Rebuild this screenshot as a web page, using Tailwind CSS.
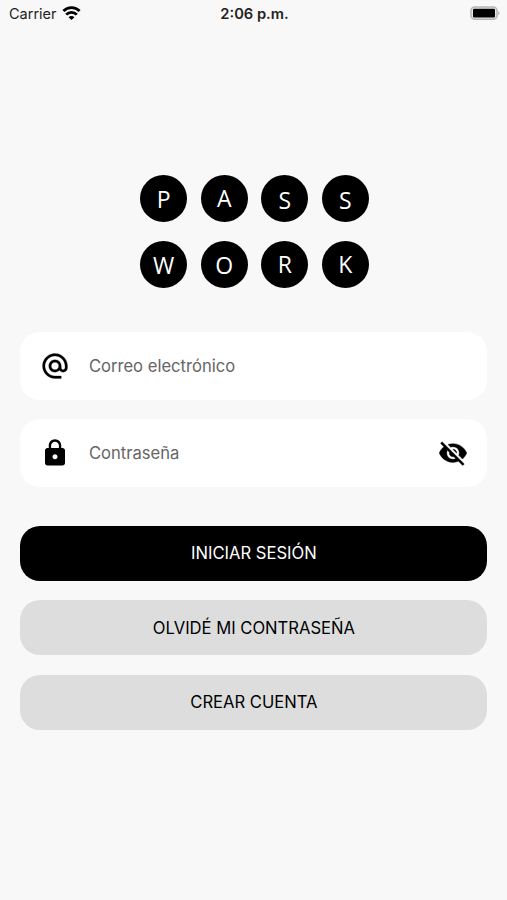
<!DOCTYPE html>
<html lang="es">
<head>
    <meta charset="UTF-8">
    <meta name="viewport" content="width=device-width, initial-scale=1.0">
    <title>Passwork</title>
    <script src="https://cdn.jsdelivr.net/npm/@tailwindcss/browser@4"></script>
</head>
<body class="bg-[#f8f8f8] font-['Inter',sans-serif] text-black">
    <div class="flex flex-col h-screen w-full overflow-hidden">

        <!-- Status bar -->
        <header class="grid grid-cols-3 items-center h-7 pl-[9px] pr-[7px] text-[14.5px] text-[#222]">
            <div class="flex items-center gap-[5px]">
                <span>Carrier</span>
                <svg class="w-[19px] h-[14px] -mt-0.5" viewBox="0 0 18 14" fill="none" stroke="#000" stroke-width="2.8">
                    <path d="M.9 5.100a11.300 11.300 0 0 1 16.200 0"/>
                    <path d="M3.700 8.600a7.300 7.300 0 0 1 10.600 0"/>
                    <path d="M9 14l-2.900-2.800a4 4 0 0 1 5.800 0z" fill="#000" stroke="none"/>
                </svg>
            </div>
            <span class="text-center font-semibold whitespace-nowrap text-[14.7px]">2:06 p.m.</span>
            <div class="flex justify-end">
                <svg class="w-[30px] h-[14px] -mt-0.5" viewBox="0 0 30 14">
                    <rect x="1" y="0.9" width="26" height="12.4" rx="3.8" fill="#e8e8e8" stroke="#b4b4b4" stroke-width="1.5"/>
                    <rect x="3" y="2.8" width="22" height="8.6" rx="1.2" fill="#000"/>
                    <path d="M28.2 5c1.800.8 1.800 3.400 0 4.200z" fill="#b4b4b4"/>
                </svg>
            </div>
        </header>

        <!-- Logo -->
        <div class="grid grid-cols-4 gap-x-[13.4px] gap-y-[19px] w-[229px] ml-[140px] mt-[147px] font-['Open_Sans',sans-serif] text-[23px] leading-none text-white">
            <div class="flex justify-center items-center size-[47.2px] rounded-full bg-black pt-[2px]">P</div>
            <div class="flex justify-center items-center size-[47.2px] rounded-full bg-black">A</div>
            <div class="flex justify-center items-center size-[47.2px] rounded-full bg-black pt-[3px]">S</div>
            <div class="flex justify-center items-center size-[47.2px] rounded-full bg-black pt-[3px]">S</div>
            <div class="flex justify-center items-center size-[47.2px] rounded-full bg-black pt-[2px]">W</div>
            <div class="flex justify-center items-center size-[47.2px] rounded-full bg-black pt-[2px]">O</div>
            <div class="flex justify-center items-center size-[47.2px] rounded-full bg-black">R</div>
            <div class="flex justify-center items-center size-[47.2px] rounded-full bg-black">K</div>
        </div>

        <form class="flex flex-col ml-[20.4px] mr-[19.6px] mt-[44px]">
            <label class="flex items-center h-[67.7px] pl-[20px] pr-[19px] rounded-[20px] bg-white">
                <svg class="size-[30px] shrink-0" viewBox="0 0 24 24">
                    <path d="M12 1.950c-5.520 0-10 4.480-10 10s4.480 10 10 10h5v-2h-5c-4.340 0-8-3.660-8-8s3.660-8 8-8 8 3.660 8 8v1.430c0 .79-.71 1.570-1.500 1.570s-1.500-.78-1.500-1.570v-1.430c0-2.760-2.240-5-5-5s-5 2.240-5 5 2.240 5 5 5c1.380 0 2.640-.56 3.540-1.470.65.89 1.770 1.470 2.960 1.470 1.970 0 3.500-1.600 3.500-3.570v-1.430c0-5.520-4.480-10-10-10zm0 13c-1.660 0-3-1.340-3-3s1.340-3 3-3 3 1.340 3 3-1.340 3-3 3z" stroke="#000" stroke-width=".2"/>
                </svg>
                <input type="email" placeholder="Correo electrónico" class="flex-1 min-w-0 ml-[18.5px] pt-px text-[16.6px] placeholder:text-[#666] outline-none">
            </label>

            <label class="flex items-center h-[67.7px] mt-[19.3px] pl-[20px] pr-[19px] rounded-[20px] bg-white">
                <svg class="size-[30px] shrink-0" viewBox="0 0 24 24">
                    <path d="M18 8h-1V6c0-2.760-2.240-5-5-5S7 3.240 7 6v2H6c-1.100 0-2 .9-2 2v10c0 1.100.9 2 2 2h12c1.100 0 2-.9 2-2V10c0-1.100-.9-2-2-2zm-6 9c-1.100 0-2-.9-2-2s.9-2 2-2 2 .9 2 2-.9 2-2 2zm3.100-9H8.900V6c0-1.710 1.390-3.100 3.100-3.100s3.100 1.390 3.100 3.100v2z"/>
                </svg>
                <input type="password" placeholder="Contraseña" class="flex-1 min-w-0 ml-[18.5px] pt-px text-[16.6px] placeholder:text-[#666] outline-none">
                <svg class="size-[30px] shrink-0" viewBox="0 0 24 24">
                    <path d="M12 7c2.760 0 5 2.240 5 5 0 .65-.13 1.260-.36 1.830l2.920 2.920c1.510-1.260 2.700-2.890 3.430-4.750-1.730-4.390-6-7.500-11-7.500-1.400 0-2.740.25-3.980.7l2.160 2.160C10.740 7.130 11.350 7 12 7zM2 4.270l2.280 2.280.46.46C3.080 8.300 1.780 10.020 1 12c1.730 4.390 6 7.500 11 7.500 1.550 0 3.030-.3 4.380-.84l.42.42L19.730 22 21 20.730 3.270 3 2 4.270zM7.530 9.800l1.550 1.550c-.05.21-.08.43-.08.65 0 1.660 1.340 3 3 3 .22 0 .44-.03.65-.08l1.550 1.550c-.67.33-1.410.53-2.200.53-2.760 0-5-2.240-5-5 0-.79.2-1.530.53-2.200zm4.310-.78l3.150 3.150.02-.16c0-1.660-1.340-3-3-3l-.17.01z" stroke="#000" stroke-width=".3"/>
                </svg>
            </label>

            <button type="button" class="h-[54.8px] mt-[38.7px] rounded-[20px] bg-black text-[16.6px] text-white">INICIAR SESIÓN</button>
            <button type="button" class="h-[54.8px] mt-[19.9px] pt-px rounded-[20px] bg-[#ddd] text-[16.6px]">OLVIDÉ MI CONTRASEÑA</button>
            <button type="button" class="h-[54.8px] mt-[19.7px] rounded-[20px] bg-[#ddd] text-[16.6px]">CREAR CUENTA</button>
        </form>
    </div>
</body>
</html>
